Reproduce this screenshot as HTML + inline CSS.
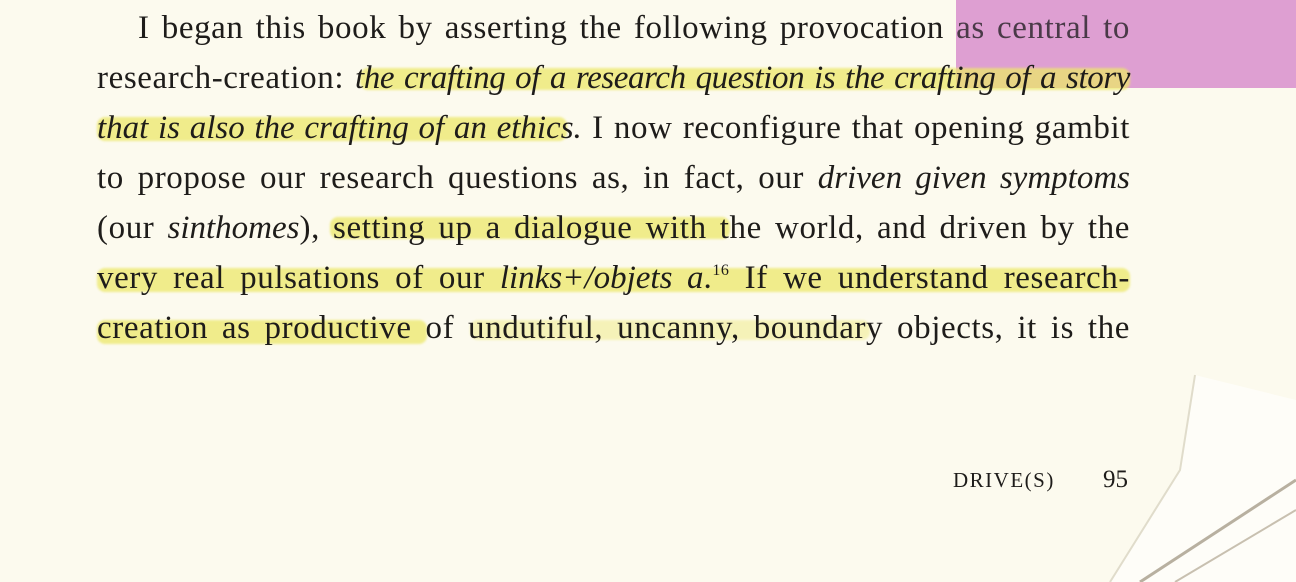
<!DOCTYPE html>
<html><head><meta charset="utf-8"><style>
body{margin:0;width:1296px;height:582px;overflow:hidden;background:#fcfaee;position:relative;font-family:"Liberation Serif",serif;color:#1e1c1a}
.l{position:absolute;left:97px;width:1033px;font-size:33px;letter-spacing:0.6px;line-height:50px;height:50px;text-align:justify;text-align-last:justify;white-space:nowrap;z-index:3}
.hl{position:absolute;background:#ece86a;opacity:.75;border-radius:8px;z-index:2;filter:blur(1px)}
i{font-style:italic;letter-spacing:0}
sup{font-size:16px;vertical-align:13px;line-height:0}
</style></head><body>
<div style="position:absolute;left:956px;top:0;width:340px;height:88px;background:#de9fd2;z-index:1"></div>
<svg style="position:absolute;left:0;top:0;z-index:1" width="1296" height="582">
<polygon points="1195,375 1296,400 1296,582 1110,582 1180,470" fill="#fefdf8"/>
<polyline points="1195,375 1180,470 1110,582" stroke="#e0dccb" fill="none" stroke-width="2"/>
<path d="M1140,582 L1296,480" stroke="#b8b0a0" stroke-width="3" fill="none"/>
<path d="M1175,582 L1296,510" stroke="#c8c0b0" stroke-width="2" fill="none"/>
</svg>
<div class="hl" style="left:360px;top:68px;width:770px;height:22px"></div>
<div class="hl" style="left:97px;top:117px;width:470px;height:24px"></div>
<div class="hl" style="left:330px;top:217px;width:400px;height:22px"></div>
<div class="hl" style="left:97px;top:268px;width:1033px;height:24px"></div>
<div class="hl" style="left:97px;top:320px;width:330px;height:24px"></div>
<div class="hl" style="left:470px;top:320px;width:400px;height:20px;opacity:.4"></div>
<div class="l" style="left:138px;width:992px;top:3px">I began this book by asserting the following provocation <span style="color:#4a3a48">as central to</span></div>
<div class="l" style="top:53px">research-creation: <i style="letter-spacing:-0.4px">the crafting of a research question is the crafting of a story</i></div>
<div class="l" style="top:103px"><i>that is also the crafting of an ethics.</i> I now reconfigure that opening gambit</div>
<div class="l" style="top:153px">to propose our research questions as, in fact, our <i>driven given symptoms</i></div>
<div class="l" style="top:203px">(our <i>sinthomes</i>), setting up a dialogue with the world, and driven by the</div>
<div class="l" style="top:253px">very real pulsations of our <i>links+/objets a</i>.<sup>16</sup> If we understand research-</div>
<div class="l" style="top:303px">creation as productive of undutiful, uncanny, boundary objects, it is the</div>
<div style="position:absolute;left:953px;top:468px;font-size:21px;letter-spacing:1.5px;z-index:3">DRIVE(S)</div>
<div style="position:absolute;left:1103px;top:466px;font-size:25px;z-index:3">95</div>
</body></html>
